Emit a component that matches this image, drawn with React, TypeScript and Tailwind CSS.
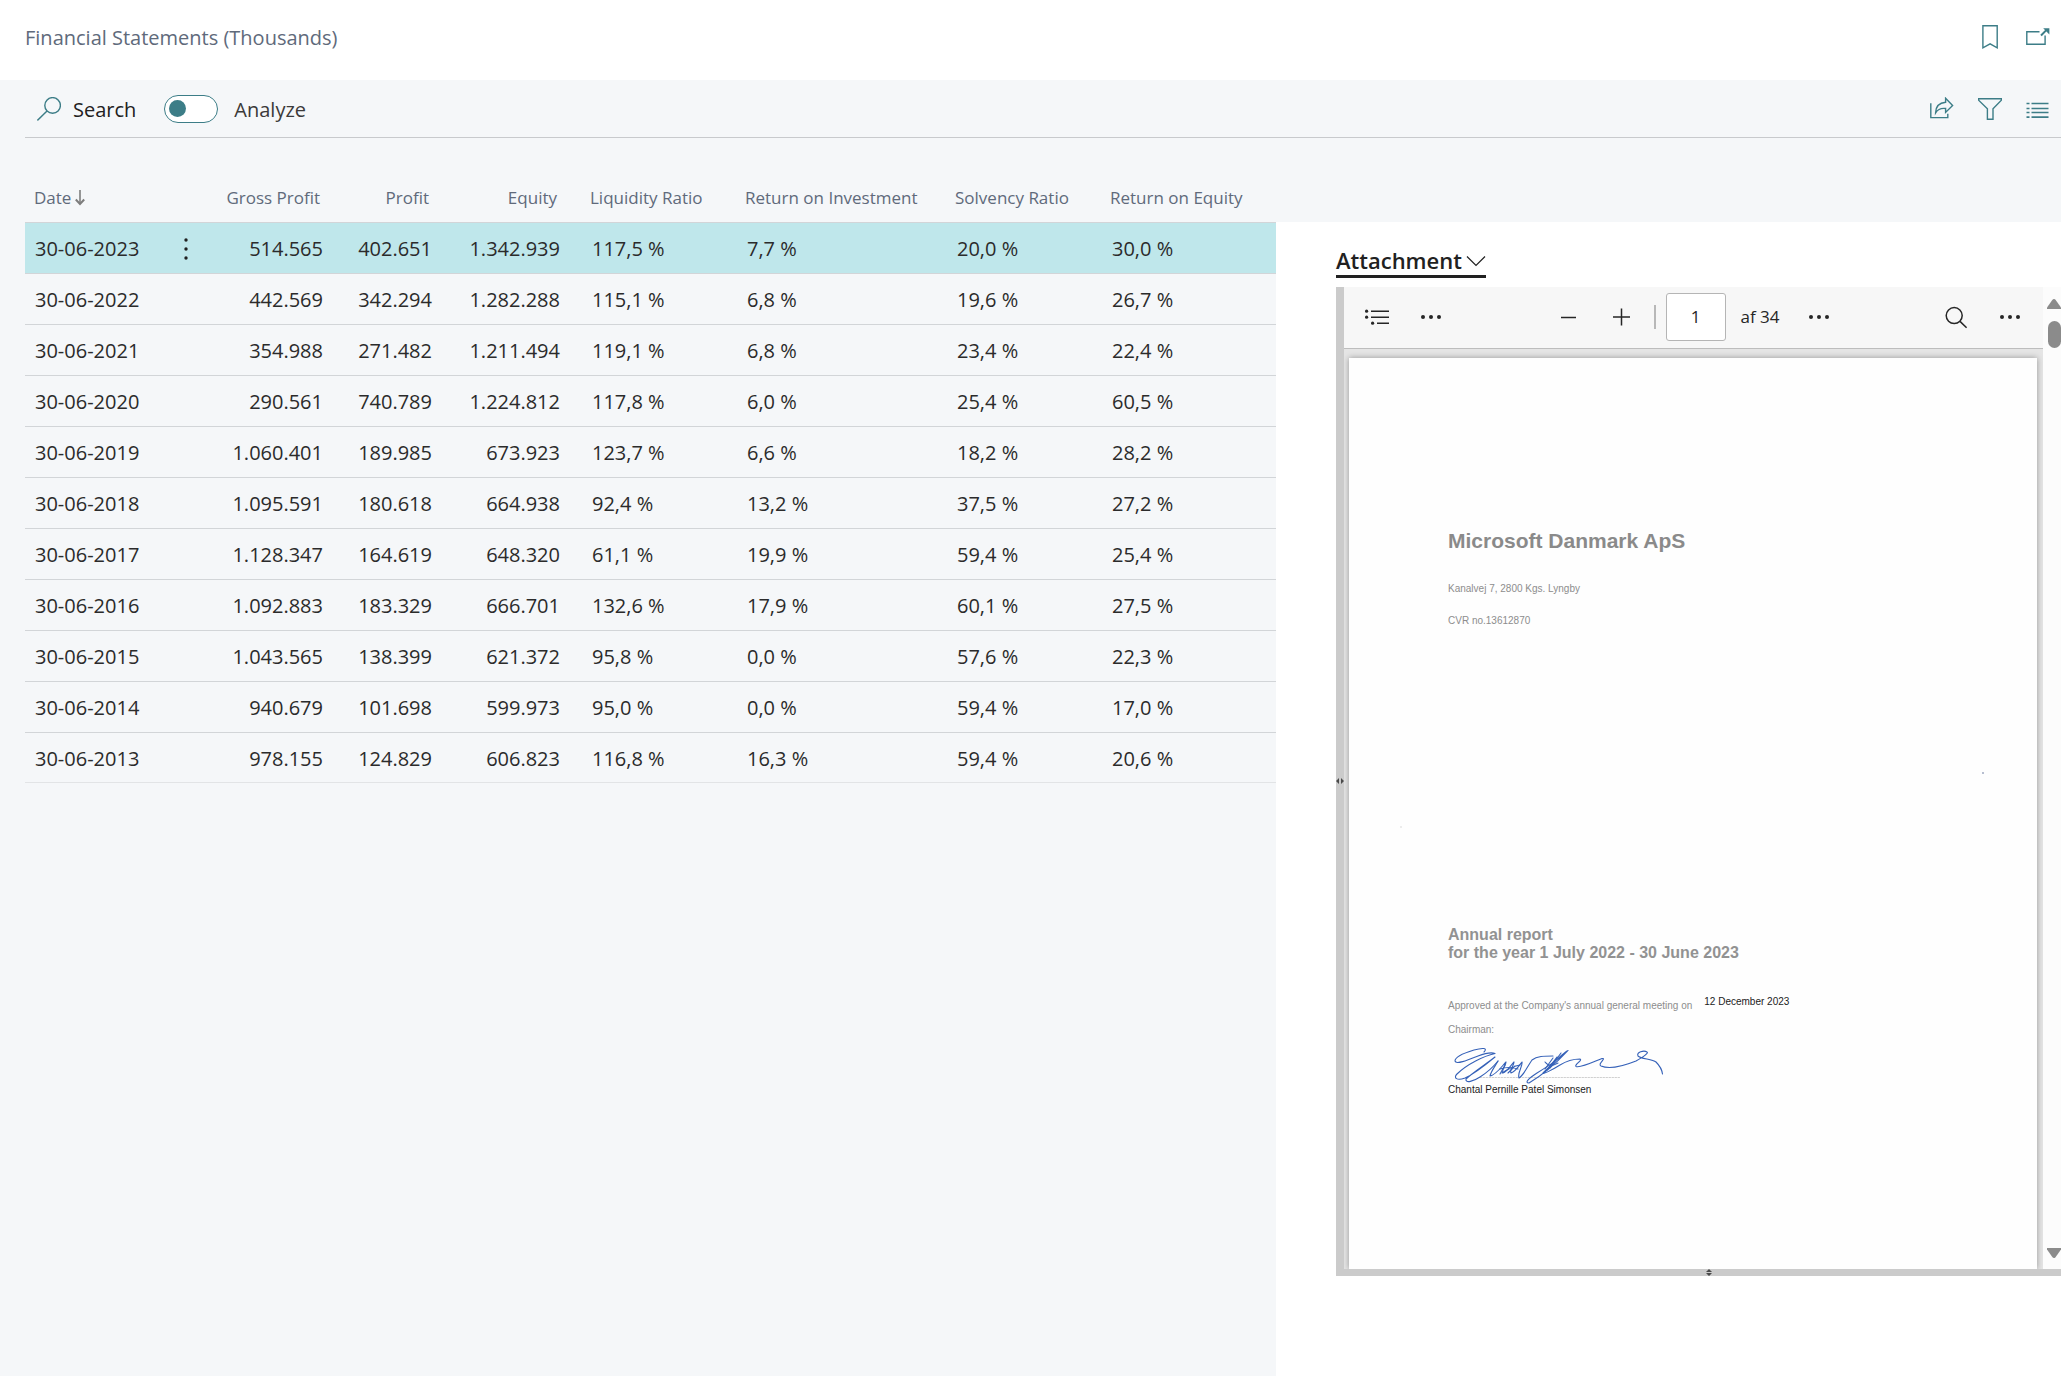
import { useState } from "react";
import type { ReactNode } from "react";
import clsx from "clsx";

type Statement = {
  date: string;
  grossProfit: string;
  profit: string;
  equity: string;
  liquidity: string;
  roi: string;
  solvency: string;
  roe: string;
};

const statements: Statement[] = [
  { date: "30-06-2023", grossProfit: "514.565", profit: "402.651", equity: "1.342.939", liquidity: "117,5 %", roi: "7,7 %", solvency: "20,0 %", roe: "30,0 %" },
  { date: "30-06-2022", grossProfit: "442.569", profit: "342.294", equity: "1.282.288", liquidity: "115,1 %", roi: "6,8 %", solvency: "19,6 %", roe: "26,7 %" },
  { date: "30-06-2021", grossProfit: "354.988", profit: "271.482", equity: "1.211.494", liquidity: "119,1 %", roi: "6,8 %", solvency: "23,4 %", roe: "22,4 %" },
  { date: "30-06-2020", grossProfit: "290.561", profit: "740.789", equity: "1.224.812", liquidity: "117,8 %", roi: "6,0 %", solvency: "25,4 %", roe: "60,5 %" },
  { date: "30-06-2019", grossProfit: "1.060.401", profit: "189.985", equity: "673.923", liquidity: "123,7 %", roi: "6,6 %", solvency: "18,2 %", roe: "28,2 %" },
  { date: "30-06-2018", grossProfit: "1.095.591", profit: "180.618", equity: "664.938", liquidity: "92,4 %", roi: "13,2 %", solvency: "37,5 %", roe: "27,2 %" },
  { date: "30-06-2017", grossProfit: "1.128.347", profit: "164.619", equity: "648.320", liquidity: "61,1 %", roi: "19,9 %", solvency: "59,4 %", roe: "25,4 %" },
  { date: "30-06-2016", grossProfit: "1.092.883", profit: "183.329", equity: "666.701", liquidity: "132,6 %", roi: "17,9 %", solvency: "60,1 %", roe: "27,5 %" },
  { date: "30-06-2015", grossProfit: "1.043.565", profit: "138.399", equity: "621.372", liquidity: "95,8 %", roi: "0,0 %", solvency: "57,6 %", roe: "22,3 %" },
  { date: "30-06-2014", grossProfit: "940.679", profit: "101.698", equity: "599.973", liquidity: "95,0 %", roi: "0,0 %", solvency: "59,4 %", roe: "17,0 %" },
  { date: "30-06-2013", grossProfit: "978.155", profit: "124.829", equity: "606.823", liquidity: "116,8 %", roi: "16,3 %", solvency: "59,4 %", roe: "20,6 %" },
];

function IconButton({ label, children }: { label: string; children: ReactNode }) {
  return (
    <button type="button" aria-label={label} className="block size-6 text-[#3c7d87]">
      <svg viewBox="0 0 24 24" className="size-6" fill="none" stroke="currentColor" strokeWidth="1.4">
        {children}
      </svg>
    </button>
  );
}

function ToolButton({ label, children }: { label: string; children: ReactNode }) {
  return (
    <button type="button" aria-label={label} className="flex size-8 items-center justify-center text-[#262626]">
      <svg viewBox="0 0 24 24" className="size-6" fill="none" stroke="currentColor" strokeWidth="1.5">
        {children}
      </svg>
    </button>
  );
}

function Dots() {
  return (
    <g fill="currentColor" stroke="none">
      <circle cx="4" cy="12" r="2" />
      <circle cx="12" cy="12" r="2" />
      <circle cx="20" cy="12" r="2" />
    </g>
  );
}

function PageHeader() {
  return (
    <header className="flex h-20 items-center justify-between bg-white pb-1.5 pl-[25px] pr-[11px]">
      <h1 className="pt-0.5 text-[20px] text-[#606a7b]">Financial Statements (Thousands)</h1>
      <div className="flex gap-6">
        <IconButton label="Bookmark">
          <path d="M4.9.8h14.3v22l-7.1-3.9-7.2 3.9z" />
        </IconButton>
        <IconButton label="Open in new window">
          <path d="M13.5 6.8H.8v12.4h18.3v-8.6" />
          <path d="m15 10.5 5.6-5.6" strokeWidth="2" />
          <path d="M17.2 3.2h6.2v6.2z" fill="currentColor" stroke="none" />
        </IconButton>
      </div>
    </header>
  );
}

function ActionBar() {
  const [analyze, setAnalyze] = useState(false);

  return (
    <div className="ml-[25px] flex h-[58px] items-center border-b border-[#c8cacd] pl-3 pr-[11px]">
      <button type="button" className="flex items-center gap-3 text-[#212121]">
        <svg viewBox="0 0 24 24" className="size-6 text-[#3c7d87]" fill="none" stroke="currentColor" strokeWidth="1.4">
          <circle cx="15.6" cy="8.4" r="7.8" />
          <path d="M10 14 .4 23.4" />
        </svg>
        <span className="pt-0.5 text-[20px]">Search</span>
      </button>
      <label className="ml-7 flex items-center gap-4 text-[20px] text-[#3b3a39]">
        <input
          type="checkbox"
          role="switch"
          checked={analyze}
          onChange={(event) => setAnalyze(event.target.checked)}
          className="peer sr-only"
        />
        <span className="flex h-7 w-[54px] items-center rounded-full border border-[#3c7d87] bg-white px-1 peer-checked:justify-end">
          <span className="size-[17px] rounded-full bg-[#3c7d87]" />
        </span>
        <span className="pt-0.5">Analyze</span>
      </label>
      <div className="ml-auto flex gap-6">
        <IconButton label="Share">
          <path d="M.8 6.2v14.4h17v-3.8" />
          <path d="M15.6 1.2 22.6 8.4l-7 7V11.500c-4.500-.5-7.800.7-10 4.300.2-6 3.800-10 10-10.500z" />
        </IconButton>
        <IconButton label="Filter">
          <path d="M.6 1.800h22.800v1.400l-8.400 8.600v10.400H9.400V11.800L.6 3.200z" />
        </IconButton>
        <IconButton label="List">
          <path d="M.5 6.500h3M5.500 6.500H22.500M.5 11.500h3M5.500 11.500H22.500M.5 15.500h3M5.500 15.500H22.500M.5 20.200h3M5.500 20.200H22.500" strokeWidth="1.700" />
        </IconButton>
      </div>
    </div>
  );
}

const numberHead = "pr-[19px] text-right font-normal";
const numberCell = "pr-4 text-right";
const ratioHead = "pl-3.5 text-left font-normal";
const ratioCell = "pl-4";

function StatementTable() {
  const [selected, setSelected] = useState("30-06-2023");

  return (
    <table className="w-full table-fixed border-separate border-spacing-0 text-[20px] text-[#2b2b2b]">
      <colgroup>
        <col className="w-[139px]" />
        <col className="w-[45px]" />
        <col className="w-[130px]" />
        <col className="w-[109px]" />
        <col className="w-[128px]" />
        <col className="w-[155px]" />
        <col className="w-[210px]" />
        <col className="w-[155px]" />
        <col />
      </colgroup>
      <thead>
        <tr className="h-[85px] whitespace-nowrap text-[17px] text-[#606a7b] [&>th]:border-b [&>th]:border-[#d2d5d8] [&>th]:pt-9">
          <th className="pl-[9px] text-left font-normal">
            <button type="button" className="flex items-center gap-1">
              Date
              <svg viewBox="0 0 10 16" className="h-4 w-2.5 text-[#7d7d7d]" fill="none" stroke="currentColor" strokeWidth="1.6">
                <path d="M5 0v14" />
                <path d="M.8 9.500 5 14l4.200-4.500" strokeWidth="2" />
              </svg>
            </button>
          </th>
          <th aria-label="Row actions" />
          <th className={numberHead}>Gross Profit</th>
          <th className={numberHead}>Profit</th>
          <th className={numberHead}>Equity</th>
          <th className={ratioHead}>Liquidity Ratio</th>
          <th className={ratioHead}>Return on Investment</th>
          <th className={ratioHead}>Solvency Ratio</th>
          <th className={ratioHead}>Return on Equity</th>
        </tr>
      </thead>
      <tbody>
        {statements.map((row) => (
          <tr
            key={row.date}
            onClick={() => setSelected(row.date)}
            className={clsx(
              "h-[51px] whitespace-nowrap last:h-[50px] [&>td]:border-b [&>td]:border-[#d2d5d8] [&>td]:pt-0.5 last:[&>td]:border-[#e2e4e6]",
              row.date === selected && "bg-[#bfe7eb]"
            )}
          >
            <td className="pl-2.5">{row.date}</td>
            <td>
              {row.date === selected && (
                <button type="button" aria-label="Show more options" className="ml-[19px] block">
                  <svg viewBox="0 0 6 24" className="h-6 w-1.5" fill="#212121">
                    <circle cx="3" cy="3" r="1.700" />
                    <circle cx="3" cy="12" r="1.700" />
                    <circle cx="3" cy="21" r="1.700" />
                  </svg>
                </button>
              )}
            </td>
            <td className={numberCell}>{row.grossProfit}</td>
            <td className={numberCell}>{row.profit}</td>
            <td className={numberCell}>{row.equity}</td>
            <td className={ratioCell}>{row.liquidity}</td>
            <td className={ratioCell}>{row.roi}</td>
            <td className={ratioCell}>{row.solvency}</td>
            <td className={ratioCell}>{row.roe}</td>
          </tr>
        ))}
      </tbody>
    </table>
  );
}

function ViewerToolbar() {
  return (
    <div className="flex h-[62px] items-center justify-between border-b border-[#bdbdbd] bg-[#f7f7f7] px-[17px] pb-0.5">
      <div className="flex gap-[22px]">
        <ToolButton label="Contents">
          <path d="M6 6.200h18M6 12.200h18M12 18.200h12" />
          <g fill="currentColor" stroke="none">
            <circle cx="1.600" cy="6.200" r="1.600" />
            <circle cx="1.600" cy="12.200" r="1.600" />
            <circle cx="7.600" cy="18.200" r="1.600" />
          </g>
        </ToolButton>
        <ToolButton label="More tools">
          <Dots />
        </ToolButton>
      </div>
      <div className="flex items-center">
        <ToolButton label="Zoom out">
          <path d="M4 12.500h15" />
        </ToolButton>
        <span className="w-[21px]" />
        <ToolButton label="Zoom in">
          <path d="M3 12h17M11.500 3.500v17" />
        </ToolButton>
        <span className="ml-4 h-6 w-0.5 bg-[#b8b8b8]" />
        <input
          type="text"
          aria-label="Page number"
          defaultValue="1"
          className="ml-2.5 h-12 w-[60px] rounded-[3px] border border-[#b5b5b5] bg-white text-center text-[17px] text-[#262626]"
        />
        <span className="ml-[15px] w-[62px] text-[17px] text-[#262626]">af 34</span>
        <ToolButton label="Page options">
          <Dots />
        </ToolButton>
      </div>
      <div className="flex gap-[22px]">
        <ToolButton label="Find">
          <circle cx="10.200" cy="10.600" r="8" />
          <path d="m16 16.400 6.600 6.400" />
        </ToolButton>
        <ToolButton label="Settings and more">
          <Dots />
        </ToolButton>
      </div>
    </div>
  );
}

function Signature() {
  return (
    <svg
      viewBox="0 0 240 48"
      className="pointer-events-none absolute -left-2 -top-1 h-12 w-60"
      fill="none"
      stroke="#3561b8"
      strokeWidth="1.100"
      strokeLinecap="round"
      strokeLinejoin="round"
    >
      <path d="M40 39.500H180" stroke="#c4c4c4" strokeWidth=".8" strokeDasharray="1.500 1.500" />
      <path d="M44 14C48 10 43 9.500 34 12C24 15 15 19 15 23C16 27 28 22 38 18C46 15 51 14 55 15.500C44 18 27 26 17 36C13 40 17 43 25 40C36 35 49 24 55 19C46 26 31 36 26 41C25 46 34 43 40 39C48 34 54 28 58 23" />
      <path d="M58 23C56 27 51 33 50 38C56 37 62 28 66 24C66 28 61 32 63 35C67 34 71 27 74 24C74 28 69 32 71 35C75 34 79 28 82 24C83 28 77 35 79 40C84 37 87 29 92 22C97 18 104 18 113 18" />
      <path d="M60 31C66 29 72 29 78 31M62 35C68 31 74 28 80 27M65 27 60 36M75 28 68 35" />
      <path d="M128 12.500C121 20 108 34 89 45C84 45 89 40 97 35C110 27 122 19 127 13C121 17 109 29 103 35C102 37 112 32 120 27C128 22 136 21 140 21C143 22 134 27 136 28.500C141 30 151 25 162 20.500C167 20 157 26 161 28C168 31 181 29 196 23C203 19 209 15 207 14C204 12 196 14 198 18C201 21 212 21 216 24C220 28 222 32 222.500 36" />
      <path d="M105 24C108 28 113 28 118 25M113 20 105 31M121 15 110 30M117 19 107 32" />
    </svg>
  );
}

function DocumentPage() {
  return (
    <div className="flex-1 overflow-hidden bg-[#e5e5e5] pl-[5px] pr-1.5 pt-[9px]">
      <article className="relative h-full bg-[#fefefe] pl-[99px] pt-[171px] font-['Liberation_Sans',Arial,sans-serif] text-[10px] leading-4 text-[#8d8d8d] shadow-[0_0_6px_rgba(0,0,0,0.35)]">
        <h2 className="text-[21px] font-bold leading-6 text-[#8a8a8a]">Microsoft Danmark ApS</h2>
        <p className="mt-7">Kanalvej 7, 2800 Kgs. Lyngby</p>
        <p className="mt-4">CVR no.13612870</p>
        <h3 className="mt-[297px] text-[16px] font-bold leading-[18px] text-[#929292]">
          Annual report
          <br />
          for the year 1 July 2022 - 30 June 2023
        </h3>
        <p className="mt-9 flex gap-3 whitespace-nowrap">
          Approved at the Company's annual general meeting on
          <span className="-mt-1 text-[#222222]">12 December 2023</span>
        </p>
        <p className="mt-2">Chairman:</p>
        <div className="relative mt-1 pt-10 text-[#222222]">
          <Signature />
          Chantal Pernille Patel Simonsen
        </div>
        {/* scanner specks */}
        <span className="absolute right-[53px] top-[414px] size-0.5 rounded-full bg-[#9fa8c0]" />
        <span className="absolute left-[51px] top-[468px] size-0.5 rounded-full bg-[#e6e6e6]" />
      </article>
    </div>
  );
}

function ViewerScrollbar() {
  return (
    <div className="flex w-[18px] flex-col items-end bg-[#fcfcfc] pb-[11px] pt-3">
      <svg viewBox="0 0 14 10" className="h-2.5 w-3.5" fill="#8b8b8b">
        <path d="M7 0c.8 0 1.200.4 1.700 1L14 8.500V10H0V8.500L5.300 1C5.800.4 6.200 0 7 0z" />
      </svg>
      <span className="mt-3 h-[27px] w-[13px] rounded-full bg-[#8b8b8b]" />
      <svg viewBox="0 0 14 10" className="mt-auto h-2.5 w-3.5" fill="#8b8b8b">
        <path d="M7 10c.8 0 1.200-.4 1.700-1L14 1.500V0H0v1.500L5.300 9c.5.6.9 1 1.700 1z" />
      </svg>
    </div>
  );
}

function AttachmentPane() {
  return (
    <aside className="flex w-[785px] shrink-0 flex-col bg-white pl-[60px] pt-6">
      <button
        type="button"
        className="flex h-8 items-center gap-1 self-start border-b-[3px] border-[#212121] text-[22px] font-semibold text-[#212121]"
      >
        Attachment
        <svg viewBox="0 0 20 12" className="h-3 w-5" fill="none" stroke="currentColor" strokeWidth="1.200">
          <path d="m1 1.500 9 9 9-9" />
        </svg>
      </button>
      <section aria-label="Attachment preview" className="mt-[9px] flex h-[989px] flex-col">
        <div className="flex min-h-0 flex-1">
          <div className="flex w-2 items-center bg-[#cbcbcb] pt-1.5">
            <svg viewBox="0 0 8 6" className="h-1.5 w-2" fill="#4a4a4a">
              <path d="M0 3 3 0v6zM8 3 5 0v6z" />
            </svg>
          </div>
          <div className="flex min-w-0 flex-1 flex-col">
            <ViewerToolbar />
            <DocumentPage />
          </div>
          <ViewerScrollbar />
        </div>
        <div className="flex h-[7px] items-center justify-center bg-[#cbcbcb] pl-5">
          <svg viewBox="0 0 6 7" className="h-[7px] w-1.5" fill="#4a4a4a">
            <path d="M3 0 6 3H0zM3 7 0 4h6z" />
          </svg>
        </div>
      </section>
    </aside>
  );
}

export default function App() {
  return (
    <div className="flex min-h-screen flex-col bg-[#f5f7f9] font-['Open_Sans','Noto_Sans',sans-serif]">
      <PageHeader />
      <ActionBar />
      <main className="flex flex-1">
        <div className="min-w-0 flex-1 pl-[25px]">
          <StatementTable />
        </div>
        <div className="flex pt-[84px]">
          <AttachmentPane />
        </div>
      </main>
    </div>
  );
}
